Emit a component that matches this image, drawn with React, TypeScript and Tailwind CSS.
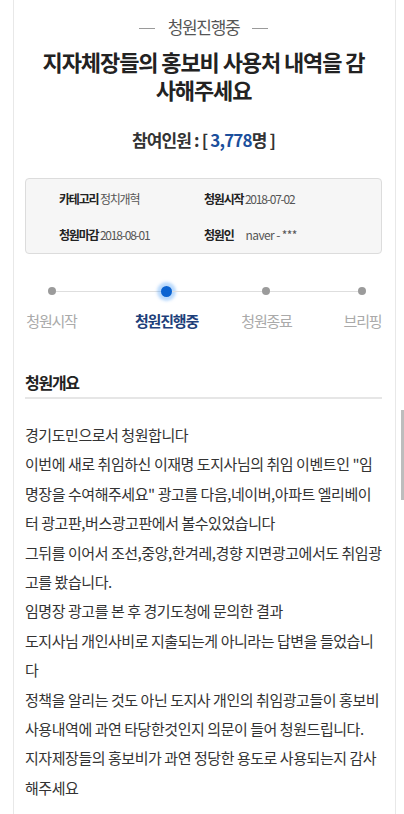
import React from "react";

const font = { fontFamily: '"Noto Sans CJK KR", "Noto Sans", sans-serif' };

const bodyLines = [
  "경기도민으로서 청원합니다",
  "이번에 새로 취임하신 이재명 도지사님의 취임 이벤트인 \"임",
  "명장을 수여해주세요\" 광고를 다음,네이버,아파트 엘리베이",
  "터 광고판,버스광고판에서 볼수있었습니다",
  "그뒤를 이어서 조선,중앙,한겨레,경향 지면광고에서도 취임광",
  "고를 봤습니다.",
  "임명장 광고를 본 후 경기도청에 문의한 결과",
  "도지사님 개인사비로 지출되는게 아니라는 답변을 들었습니",
  "다",
  "정책을 알리는 것도 아닌 도지사 개인의 취임광고들이 홍보비",
  "사용내역에 과연 타당한것인지 의문이 들어 청원드립니다.",
  "지자제장들의 홍보비가 과연 정당한 용도로 사용되는지 감사",
  "해주세요",
];

export default function App() {
  return (
    <div className="relative w-[404px] h-[814px] overflow-hidden bg-white" style={font}>
      <div className="ml-[13px] w-[383px] h-[814px] border-l border-r border-[#e8e8e8] pl-[11px] pr-[13px]">
        {/* status */}
        <div className="pt-[15px] flex items-center justify-center gap-[13px] h-[39px]">
          <div className="w-[16px] h-px bg-[#9a9a9a] mt-[2px]" />
          <div className="text-[17px] leading-[24px] tracking-[-0.08em] text-[#555]">청원진행중</div>
          <div className="w-[16px] h-px bg-[#9a9a9a] mt-[2px]" />
        </div>
        {/* title */}
        <div className="mt-[8px] text-center text-[22px] leading-[28px] font-bold tracking-[-0.05em] text-[#222]">
          <div className="whitespace-nowrap">지자체장들의 홍보비 사용처 내역을 감</div>
          <div className="whitespace-nowrap">사해주세요</div>
        </div>
        {/* count */}
        <div className="mt-[25px] text-center text-[17px] leading-[24px] font-bold tracking-[-0.05em] text-[#333] whitespace-nowrap">
          참여인원 : [ <span className="text-[#1b4f9c]">3,778</span>명 ]
        </div>
        {/* info box */}
        <div className="mt-[26px] h-[76px] rounded-[4px] border border-[#dcdcdc] bg-[#f6f6f6] pl-[33px] pt-[11px] text-[12px] leading-[18px] tracking-[-0.1em]">
          <div className="flex h-[18px]">
            <div className="w-[145px] shrink-0 whitespace-nowrap">
              <span className="font-bold text-[#222]">카테고리</span> <span className="text-[#555]">정치개혁</span>
            </div>
            <div className="whitespace-nowrap">
              <span className="font-bold text-[#222]">청원시작</span> <span className="text-[#555]">2018-07-02</span>
            </div>
          </div>
          <div className="flex h-[18px] mt-[18px]">
            <div className="w-[145px] shrink-0 whitespace-nowrap">
              <span className="font-bold text-[#222]">청원마감</span> <span className="text-[#555]">2018-08-01</span>
            </div>
            <div className="whitespace-nowrap flex">
              <span className="font-bold text-[#222]">청원인</span>
              <span className="text-[#555] ml-[12px] tracking-[-0.05em]">naver - ***</span>
            </div>
          </div>
        </div>
        {/* progress dots */}
        <div className="mt-[31px] h-[12px] flex items-center pl-[23px]">
          <div className="w-[8px] h-[8px] rounded-full bg-[#9b9b9b] shrink-0" />
          <div className="w-[105px] h-px bg-[#dedede] shrink-0" />
          <div className="w-[11px] h-[11px] rounded-full bg-[#0b63d1] shrink-0 shadow-[0_0_3px_4px_rgba(60,150,245,0.35)]" />
          <div className="w-[90px] h-px bg-[#dedede] shrink-0" />
          <div className="w-[8px] h-[8px] rounded-full bg-[#9b9b9b] shrink-0" />
          <div className="w-[88px] h-px bg-[#dedede] shrink-0" />
          <div className="w-[8px] h-[8px] rounded-full bg-[#9b9b9b] shrink-0" />
        </div>
        {/* labels */}
        <div className="mt-[13px] flex text-[15px] leading-[22px] tracking-[-0.08em] whitespace-nowrap">
          <div className="w-[53px] flex justify-center text-[#aaa]">청원시작</div>
          <div className="w-[67px] ml-[55px] flex justify-center font-bold text-[#1e3f7a]">청원진행중</div>
          <div className="w-[53px] ml-[40px] flex justify-center text-[#aaa]">청원종료</div>
          <div className="w-[39px] ml-[50px] flex justify-center text-[#aaa]">브리핑</div>
        </div>
        {/* section title */}
        <div className="mt-[39px] pb-[4px] border-b-2 border-[#e6e6e6] text-[16px] leading-[22px] font-bold tracking-[-0.08em] text-[#222]">
          청원개요
        </div>
        {/* body */}
        <div className="mt-[21px] text-[15px] leading-[29.4px] tracking-[-0.03em] text-[#333]">
          {bodyLines.map((l, i) => (
            <div key={i} className="whitespace-nowrap">{l}</div>
          ))}
        </div>
      </div>
      {/* scrollbar */}
      <div className="absolute right-0 top-[410px] w-[3px] h-[90px] bg-[#bdbdbd]" />
    </div>
  );
}
